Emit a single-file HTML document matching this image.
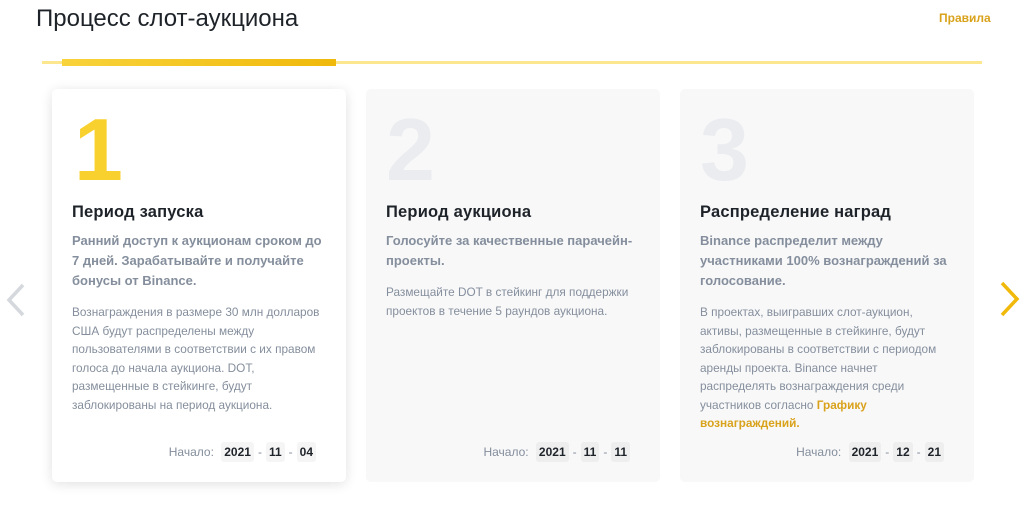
<!DOCTYPE html>
<html><head><meta charset="utf-8"><style>
*{margin:0;padding:0;box-sizing:border-box}
body{width:1024px;height:505px;background:#fff;font-family:"Liberation Sans","DejaVu Sans",sans-serif;position:relative;overflow:hidden;color:#1e2329}
.h{position:absolute;left:36px;top:5px;font-size:24px;color:#1e2329;letter-spacing:0}
.rules{position:absolute;left:939px;top:11px;font-size:12px;color:#d9a21b;font-weight:bold}
.line{position:absolute;left:42px;top:61px;width:940px;height:3px;background:#fce68e}
.bar{position:absolute;left:62px;top:59px;width:274px;height:7px;background:linear-gradient(90deg,#f8d33a,#f0b90b)}
.card{position:absolute;top:89px;width:294px;height:393px;border-radius:5px;background:#f8f8f9;padding:0 20px}
.c1{left:52px;background:#fff;box-shadow:0 2px 12px rgba(0,0,0,.12)}
.c2{left:366px}.c3{left:680px}
.num{position:absolute;left:20px;top:16px;font-size:88px;line-height:90px;color:#eaecef;font-weight:bold}
.c1 .num{color:#f8d12f;left:22px}
.t{position:absolute;left:20px;top:114px;font-size:16.5px;color:#1e2329;font-weight:bold;letter-spacing:0.2px}
.s{position:absolute;left:20px;top:142px;width:260px;font-size:13px;line-height:20px;color:#848e9c;font-weight:bold;white-space:nowrap}
.b{position:absolute;left:20px;width:254px;font-size:11.8px;line-height:18.5px;color:#848e9c}
.d{position:absolute;right:26px;top:353px;font-size:12px;color:#848e9c;display:flex;align-items:center}
.d span.v{background:#f5f5f5;color:#1e2329;padding:3px 3px;border-radius:3px;margin:0 4px;font-weight:bold}
.c2 .d span.v,.c3 .d span.v{background:#eeeeef}
a{color:#d9a21b;font-weight:bold;text-decoration:none}
</style></head><body>
<div class="h">Процесс слот-аукциона</div>
<div class="rules">Правила</div>
<div class="line"></div><div class="bar"></div>
<svg style="position:absolute;left:3px;top:282px" width="24" height="36"><path d="M20 3 L6 18 L20 33" stroke="#d5d8dc" stroke-width="3.5" fill="none"/></svg>
<svg style="position:absolute;left:998px;top:280px" width="24" height="38"><path d="M4 3 L19 19 L4 35" stroke="#f0b90b" stroke-width="3.5" fill="none"/></svg>
<div class="card c1"><div class="num">1</div><div class="t">Период запуска</div>
<div class="s">Ранний доступ к аукционам сроком до<br>7 дней. Зарабатывайте и получайте<br>бонусы от Binance.</div>
<div class="b" style="top:214px">Вознаграждения в размере 30 млн долларов США будут распределены между пользователями в соответствии с их правом голоса до начала аукциона. DOT, размещенные в стейкинге, будут заблокированы на период аукциона.</div>
<div class="d">Начало:&nbsp;<span class="v">2021</span>-<span class="v">11</span>-<span class="v">04</span></div></div>
<div class="card c2"><div class="num">2</div><div class="t">Период аукциона</div>
<div class="s">Голосуйте за качественные парачейн-<br>проекты.</div>
<div class="b" style="top:194px">Размещайте DOT в стейкинг для поддержки проектов в течение 5 раундов аукциона.</div>
<div class="d">Начало:&nbsp;<span class="v">2021</span>-<span class="v">11</span>-<span class="v">11</span></div></div>
<div class="card c3"><div class="num">3</div><div class="t">Распределение наград</div>
<div class="s">Binance распределит между<br>участниками 100% вознаграждений за<br>голосование.</div>
<div class="b" style="top:214px">В проектах, выигравших слот-аукцион, активы, размещенные в стейкинге, будут заблокированы в соответствии с периодом аренды проекта. Binance начнет распределять вознаграждения среди участников согласно <a>Графику вознаграждений.</a></div>
<div class="d">Начало:&nbsp;<span class="v">2021</span>-<span class="v">12</span>-<span class="v">21</span></div></div>
</body></html>
